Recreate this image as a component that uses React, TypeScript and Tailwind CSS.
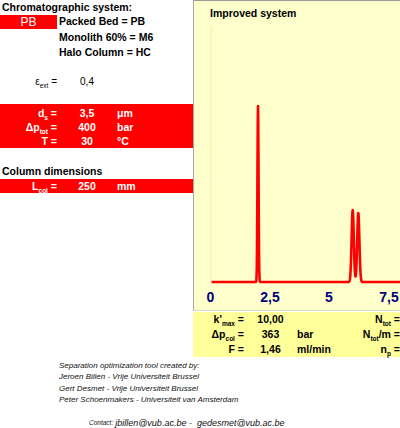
import type { ReactNode } from "react";

function Sub({ children }: { children: ReactNode }) {
  return <span className="text-[6.5px] relative top-[3px] leading-none">{children}</span>;
}

function RedRow({ label, value, unit }: { label: ReactNode; value: string; unit: string }) {
  return (
    <div className="grid grid-cols-[57px_60px_1fr] items-center h-[14px] whitespace-nowrap">
      <div className="text-right">{label}</div>
      <div className="text-center">{value}</div>
      <div>{unit}</div>
    </div>
  );
}

function YellowRow({ label, value, unit, right }: { label: ReactNode; value: string; unit: string; right: ReactNode }) {
  return (
    <div className="grid grid-cols-[51px_53px_60px_1fr] items-center h-[15px] whitespace-nowrap">
      <div className="text-right">{label}</div>
      <div className="text-center">{value}</div>
      <div>{unit}</div>
      <div className="text-right">{right}</div>
    </div>
  );
}

// chromatogram: sum of gaussians on a flat baseline
function buildPath() {
  const peaks = [
    { x: 64, h: 176, s: 0.55 },
    { x: 158.7, h: 72, s: 1.1 },
    { x: 164.3, h: 69, s: 1.1 },
  ];
  let d = "";
  for (let x = 17.5; x <= 206; x += 0.25) {
    let y = 256;
    for (const p of peaks) {
      y -= p.h * Math.exp(-((x - p.x) ** 2) / (2 * p.s * p.s));
    }
    d += (d ? " L" : "M") + x.toFixed(2) + " " + y.toFixed(2);
  }
  return d;
}

export default function App() {
  const path = buildPath();
  return (
    <div className="w-[400px] h-[428px] overflow-hidden bg-white text-black font-['Liberation_Sans',Arial,sans-serif]">
      <div className="flex h-[311px]">
        <div className="w-[193px] shrink-0 text-[10.5px] font-bold">
          <div className="h-[15px] flex items-center pl-[2px]">Chromatographic system:</div>
          <div className="h-[15px] flex">
            <div className="w-[57px] h-[14px] bg-[#ff0000] text-white text-[12px] font-normal flex items-center justify-center">
              PB
            </div>
            <div className="pl-[2px] h-[14px] flex items-center">Packed Bed = PB</div>
          </div>
          <div className="h-[15px] flex items-center pl-[59px]">Monolith 60% = M6</div>
          <div className="h-[15px] flex items-center pl-[59px]">Halo Column = HC</div>

          <div className="mt-[14px] grid grid-cols-[57px_60px_1fr] items-center h-[14px] font-normal">
            <div className="text-right text-[10px]">
              ε<Sub>ext</Sub> =
            </div>
            <div className="text-center text-[10px]">0,4</div>
            <div />
          </div>

          <div className="mt-[16px] bg-[#ff0000] text-white pt-[2px] h-[44px]">
            <RedRow label={<>d<Sub>s</Sub> =</>} value="3,5" unit="μm" />
            <RedRow label={<>Δp<Sub>tot</Sub> =</>} value="400" unit="bar" />
            <RedRow label="T =" value="30" unit="°C" />
          </div>

          <div className="mt-[17px] h-[14px] flex items-center pl-[2px]">Column dimensions</div>
          <div className="bg-[#ff0000] text-white h-[14px]">
            <RedRow label={<>L<Sub>col</Sub> =</>} value="250" unit="mm" />
          </div>
        </div>

        <div className="flex-1 flex flex-col bg-[#ffffcc] border-t border-l border-b border-t-[#9a9a9a] border-l-[#a8a8a8] border-b-[#d8d8c0]">
          <div className="h-[25px] shrink-0 flex items-center pl-[16px] text-[10.5px] font-bold">Improved system</div>
          <svg width="206" height="284" viewBox="0 0 206 284" className="block">
            <line x1="17" y1="0" x2="17" y2="256" stroke="#ecebc4" strokeWidth="1" />
            <path d={path} fill="none" stroke="#ff0000" strokeWidth="2.6" strokeLinejoin="round" />
            <g fill="#000080" fontFamily="'Liberation Sans', Arial, sans-serif" fontWeight="bold" fontSize="14" textAnchor="middle">
              <text x="16.5" y="276">0</text>
              <text x="76" y="276">2,5</text>
              <text x="135" y="276">5</text>
              <text x="195" y="276">7,5</text>
            </g>
          </svg>
        </div>
      </div>

      <div className="flex">
        <div className="w-[193px] shrink-0" />
        <div className="flex-1 mt-[1px] h-[45px] bg-[#ffff99] text-[10.5px] font-bold">
          <YellowRow label={<>k'<Sub>max</Sub> =</>} value="10,00" unit="" right={<>N<Sub>tot</Sub> =</>} />
          <YellowRow label={<>Δp<Sub>col</Sub> =</>} value="363" unit="bar" right={<>N<Sub>tot</Sub>/m =</>} />
          <YellowRow label="F =" value="1,46" unit="ml/min" right={<>n<Sub>p</Sub> =</>} />
        </div>
      </div>

      <div className="pl-[59px] mt-[3px] italic text-[8px] leading-[11.33px] text-[#111]">
        <div>Separation optimization tool created by:</div>
        <div>Jeroen Billen - Vrije Universiteit Brussel</div>
        <div>Gert Desmet - Vrije Universiteit Brussel</div>
        <div>Peter Schoenmakers - Universiteit van Amsterdam</div>
      </div>
      <div className="pl-[89px] mt-[12px] h-[12px] flex items-center italic text-[#111] whitespace-nowrap">
        <span className="text-[6.5px] mr-[2px]">Contact:</span>
        <span className="text-[9px]">jbillen@vub.ac.be -&nbsp; gedesmet@vub.ac.be</span>
      </div>
    </div>
  );
}
